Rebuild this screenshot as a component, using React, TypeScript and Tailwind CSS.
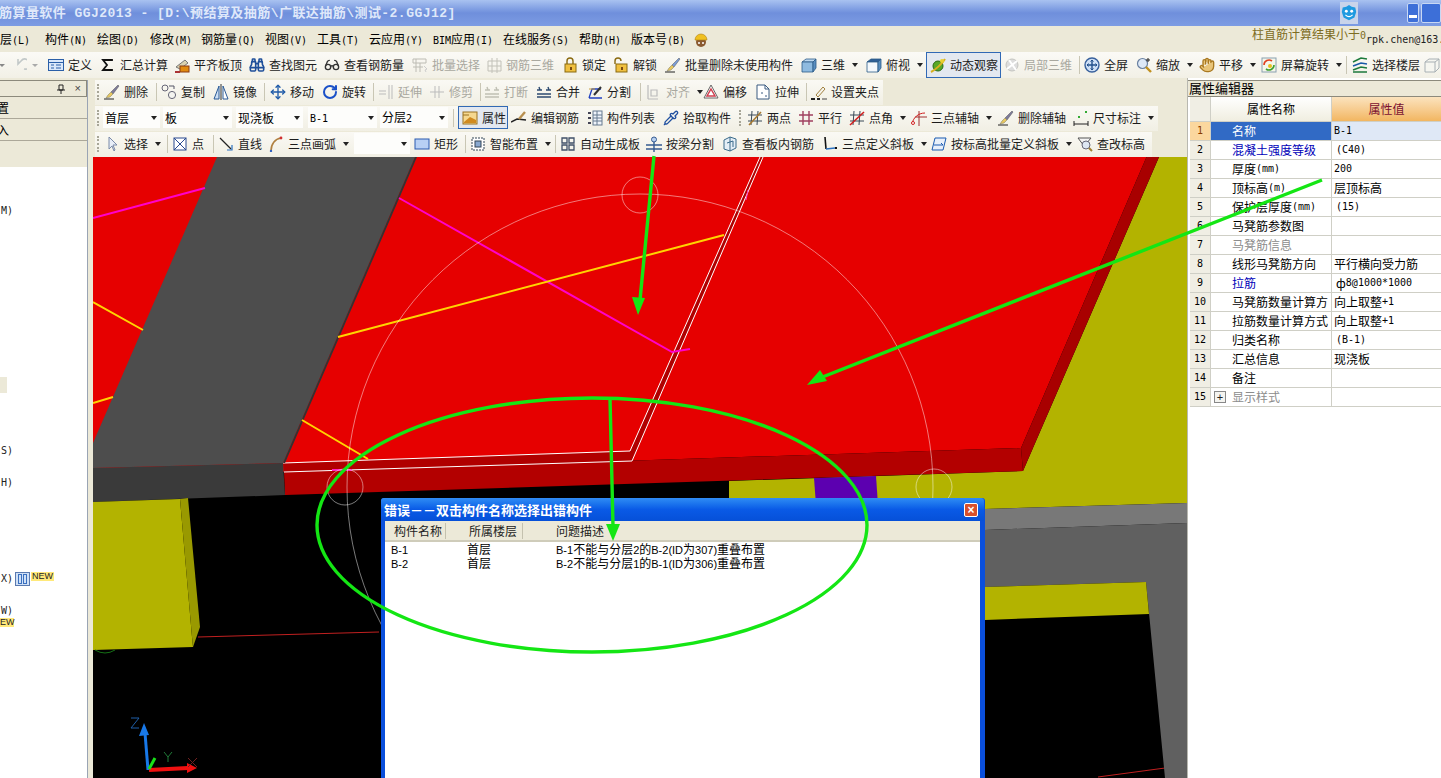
import type { ReactNode } from "react";
import { Binoculars, Glasses, Hand, Move, Pipette, RotateCw } from "lucide-react";

// 16x16 toolbar glyphs, drawn to follow the old XP style icons
const s = (d: string, c: string, w = 1) => <path d={d} stroke={c} strokeWidth={w} fill="none" />;
const brush = (c: string) => (
  <>
    <path d="M14 1l1 1-6 8-2-2z" fill={c} stroke="#555" strokeWidth=".5" />
    <path d="M7 8l2 2-3 3-4 1 2-3z" fill="#e8c860" stroke="#776" strokeWidth=".5" />
    {s("M0 15h10", "#222")}
  </>
);
const cube = (top: string, side: string) => (
  <>
    <path d="M1 5l4-3h10l-3 3z" fill={top} stroke="#2c5a88" strokeWidth=".8" />
    <path d="M1 5h11v10H1z" fill={side} stroke="#2c5a88" strokeWidth=".8" />
    <path d="M12 5l3-3v9l-3 4z" fill="#5b8fc0" stroke="#2c5a88" strokeWidth=".8" />
  </>
);
const lock = (open: boolean) => (
  <>
    {s(open ? "M2 7V4a3 3 0 016 0" : "M5 7V4a3 3 0 016 0v3", "#8a6a10", 1.4)}
    <rect x="3" y="7" width="11" height="8" fill="#f0c040" stroke="#8a6a10" />
    <rect x="8" y="10" width="2" height="3" fill="#7a4a10" />
  </>
);

const icons: Record<string, ReactNode> = {
  define: (<><rect x=".5" y="2.5" width="15" height="11" fill="#dbe8fa" stroke="#2b5fa8" />{s("M1 5.5h14M8 8h5M8 11h5M3 8h3M3 11h3", "#2b5fa8")}</>),
  sigma: s("M12 4V3H3l4 5-4 5h9v-1", "#111", 1.8),
  alignTop: (<><path d="M2 10l9-7 3 3-8 6z" fill="#d9d2b0" stroke="#777" /><rect x="6" y="9" width="9" height="6" fill="#e08a10" stroke="#8a3a10" />{s("M1 15h5", "#a33", 2)}</>),
  batch: (<>{s("M1 2h13v4H1zM4 2v13M1 10h10M8 6v9", "#bdbcb4")}{s("M12 9l3 3-2 1 1 2", "#ccc")}</>),
  rebar3d: s("M2 4h13v10H2zM6 1v15M11 1v15M2 9h13", "#c2c1b8"),
  lock: lock(false),
  unlock: lock(true),
  batchDel: brush("#7a9cd8"),
  cube: cube("#bcd8f0", "#8fbbe0"),
  topView: cube("#2f5f96", "#f4f8fc"),
  orbit: (<><circle cx="8" cy="9" r="5" fill="#58a828" stroke="#2a6a14" /><path d="M1 15C5 13 12 7 15 2" stroke="#d8b020" strokeWidth="2" fill="none" /><circle cx="12" cy="4" r="2" fill="#e8d030" /></>),
  local3d: (<><circle cx="8" cy="8" r="6" fill="#ddd" stroke="#c4c4c0" />{s("M3 12L13 4M5 3l7 10", "#fff", 2)}</>),
  fullscreen: (<><circle cx="8" cy="8" r="7" fill="#cfe0f6" stroke="#38609c" strokeWidth="1.4" />{s("M8 3v10M3 8h10", "#23508c", 1.4)}{s("M6.5 4.5L8 3l1.5 1.5M6.5 11.5L8 13l1.5-1.5M4.5 6.5L3 8l1.5 1.5M11.5 6.5L13 8l-1.5 1.5", "#23508c")}</>),
  zoom: (<><circle cx="6.5" cy="6.5" r="5" fill="#dde8f6" stroke="#6a80a0" strokeWidth="1.2" />{s("M10 10l5 5", "#c09020", 2.4)}{s("M12 1v4M10 3h4", "#222")}</>),
  pan: (<><path d="M3 9l2-3 2 1 1-3 2 1 2-1v6l-2 4H6z" fill="#e8c478" stroke="#8a6a30" />{s("M11 0v4M9 2h4", "#222")}</>),
  screenRot: (<><rect x="1" y="1" width="14" height="14" fill="#f4f6ea" stroke="#8aa0b0" /><path d="M3 8a5 5 0 018-4" stroke="#e04020" strokeWidth="1.6" fill="none" /><path d="M13 8a5 5 0 01-8 4" stroke="#40a030" strokeWidth="1.6" fill="none" /><circle cx="9" cy="9" r="2" fill="#e8c020" /></>),
  floors: (<>{s("M1 5l8-4 6 1", "#1c7a3c", 1.6)}{s("M1 9l8-3 6 1", "#1a5aa8", 1.6)}{s("M1 13l8-3 6 1M1 15h14", "#1c7a3c", 1.6)}</>),
  ghost: (<><path d="M1 5l4-3h10v9l-4 4H1z" fill="#f6f6f0" stroke="#a8b0b4" />{s("M1 5h10v10M11 5l4-3", "#a8b0b4")}</>),
  del: brush("#7d7a9a"),
  copy: (<><circle cx="4" cy="4" r="3" fill="none" stroke="#667" /><circle cx="11" cy="11" r="3.6" fill="#f4f4f0" stroke="#667" />{s("M8 2h5M13 2v3", "#556")}</>),
  mirror: (<><path d="M1 15L6 2v13z" fill="#cfe0f4" stroke="#2a5a98" /><path d="M15 15L10 2v13z" fill="#fff" stroke="#2a5a98" />{s("M8 0v16", "#333")}</>),
  extend: s("M1 7h7M1 10h7M11 1v14M14 1v14", "#bbb"),
  trim: s("M1 8h14M6 2v12M10 2v12", "#bbb"),
  break: s("M1 6h5M10 6h5M1 13h14M3 3l1 3M12 3l1 3M1 10h14", "#c0c0b4", 1.4),
  merge: s("M1 6h5M10 6h5M1 13h14M3 3l1 3M12 3l1 3M1 10h14", "#2c4a70", 1.4),
  split: (<>{s("M2 14h13M2 14l3-9h9", "#2040c0", 1.3)}{s("M7 11L14 3", "#333", 2)}{s("M2 5h6", "#c8a040")}</>),
  align: s("M2 1v14M2 15h10M5 6h6v6H5z", "#bbb", 1.2),
  offset: (<><path d="M8 1l7 13H1z" fill="#fff" stroke="#666" /><path d="M8 5l4 7H4z" fill="none" stroke="#d04050" strokeWidth="1.5" /></>),
  stretch: (<><path d="M2 1h8l4 4v10H2z" fill="#fff" stroke="#3a5a80" />{s("M10 1v4h4M6 9h2M10 12h2", "#3a5a80")}</>),
  grips: (<>{s("M5 11l7-8 2 2-7 8z", "#a08040")}<rect x="0" y="14" width="4" height="2" fill="#222" /><rect x="6" y="14" width="3" height="2" fill="#222" />{s("M11 15h5", "#444")}</>),
  attr: (<><rect x="1" y="2" width="14" height="12" fill="#f5d890" stroke="#9a7020" />{s("M1 5h6", "#9a7020")}<path d="M2 12l6-5 6 3v3H2z" fill="#d08a20" /></>),
  editBar: (<>{s("M0 12l6-3 9 1", "#222", 1.4)}{s("M8 9l6-7", "#b89050", 2.4)}</>),
  list: (<><rect x="6" y="1" width="9" height="14" fill="#eef3fa" stroke="#667a90" />{s("M6 5h9M6 8h9M6 11h9M10 1v14", "#667a90")}{s("M1 3h3M1 8h3M1 13h3", "#445", 2)}</>),
  two: (<>{s("M1 5h14M1 11h14M5 1l-1 14M11 1l-1 14", "#3a4a58")}{s("M2 15L14 2", "#a87a30", 1.5)}</>),
  parallel: s("M1 5h14M1 11h14M5 1v14M11 1v14", "#a04060", 1.4),
  angle: (<>{s("M1 5h14M1 11h14M5 1L4 15M11 1l-1 14", "#3a4a58")}{s("M1 15L15 2", "#d02020", 1.6)}</>),
  threeAxis: (<>{s("M8 1v15M4 7h12", "#a03030")}{s("M1 14C2 8 7 3 14 3", "#d02020")}<circle cx="2" cy="13" r="1.5" fill="#fff" stroke="#d02020" /></>),
  dim: (<>{s("M1 14h14M1 11v6M15 11v6", "#222")}<rect x="5" y="6" width="2" height="2" fill="#3a3" /><rect x="12" y="1" width="2" height="2" fill="#3a3" /></>),
  select: (<path d="M5 1v12l3-3 2 5 1-1-2-5h4z" fill="#e8eef8" stroke="#7a8aa8" />),
  point: (<><rect x="2" y="2" width="12" height="12" fill="#fff" stroke="#2a4a90" />{s("M2 2l12 12M14 2L2 14", "#2a4a90")}</>),
  line: (<>{s("M2 2l11 11", "#222", 1.2)}{s("M14 9v5H9", "#2a70c0", 1.2)}</>),
  arc: (<>{s("M3 15C3 8 7 3 13 2", "#b08040", 1.6)}<circle cx="13" cy="2" r="1.4" fill="#d03030" /><circle cx="3" cy="15" r="1.2" fill="#3060c0" /></>),
  rect: (<rect x="1" y="3" width="14" height="10" fill="#b8d0f4" stroke="#2a5ab0" />),
  smart: (<><path d="M2 2h12v12H2z" fill="#fff" stroke="#345" strokeDasharray="2 1" /><rect x="5" y="5" width="6" height="6" fill="#88a8d0" stroke="#345" /></>),
  auto: s("M2 2h5v5H2zM9 2h5v5H9zM2 9h5v5H2zM9 9h5v5H9z", "#405068", 1.3),
  beamSplit: (<>{s("M0 9h16M0 13h16", "#345a90", 1.4)}{s("M8 6v10", "#345a90", 1.4)}<circle cx="8" cy="3.5" r="2.5" fill="#b8d0f0" stroke="#345a90" /></>),
  viewBoard: (<><path d="M2 4l6-3 6 2v9l-6 3-6-2z" fill="#e4eef6" stroke="#3a6a8a" />{s("M5 7l6-2v6M8 1v14", "#3a6a8a")}</>),
  slope3: (<>{s("M3 1l1 12", "#111", 1.6)}{s("M4 13l9-1", "#2a70c0", 1.6)}<rect x="13" y="11" width="2" height="2" fill="#111" /></>),
  slopeEl: (<><path d="M4 2h11l-3 12H1z" fill="#e8f0fa" stroke="#1a5ab0" />{s("M3 9h9l-2-2", "#1a5ab0")}</>),
  check: (<><path d="M1 2h13l-5 6-2 2z" fill="#f4f4f4" stroke="#555" /><circle cx="9" cy="9" r="4" fill="#dde6f2" stroke="#667" />{s("M12 12l3 3", "#a08030", 2)}</>),
};

function Icon({ name }: { name: string }) {
  return (
    <svg viewBox="0 0 16 16" className="h-4 w-4 shrink-0">
      {icons[name]}
    </svg>
  );
}

// CJK runs stay in Noto, latin runs get a narrow mono that mimics SimSun half-width
function Mix({ t }: { t: string }) {
  return (
    <>
      {t.split(/([\x20-\x7e]+)/).map((p, i) =>
        i % 2 === 1 ? (
          <span key={i} className="font-['DejaVu_Sans_Mono',monospace] text-[10px]">
            {p}
          </span>
        ) : (
          p
        ),
      )}
    </>
  );
}

// the dialog list uses a proportional latin face
function SansMix({ t }: { t: string }) {
  return (
    <>
      {t.split(/([\x20-\x7e]+)/).map((p, i) =>
        i % 2 === 1 ? (
          <span key={i} className="font-['Liberation_Sans',sans-serif] text-[11px]">
            {p}
          </span>
        ) : (
          p
        ),
      )}
    </>
  );
}

function Caret() {
  return <span className="ml-[7px] h-0 w-0 shrink-0 border-x-[3px] border-t-[4px] border-x-transparent border-t-[#222]" />;
}

type ToolProps = { w: string; icon?: ReactNode; i?: string; label: string; arrow?: boolean; off?: boolean; on?: boolean };

function Tool({ w, icon, i, label, arrow, off, on }: ToolProps) {
  return (
    <div
      className={`flex h-full shrink-0 items-center whitespace-nowrap ${w} ${off ? "text-[#a9a89f]" : "text-[#1c1c1c]"} ${
        on ? "border border-[#3169b5] bg-[#e3e8f0] pl-[3px]" : ""
      }`}
    >
      {i ? <Icon name={i} /> : icon}
      <span className="ml-1">
        <Mix t={label} />
      </span>
      {arrow ? <Caret /> : null}
    </div>
  );
}

function Sep({ w }: { w: string }) {
  return (
    <div className={`flex h-full shrink-0 items-center justify-center ${w}`}>
      <div className="h-[18px] w-px bg-[#c9c6b4]" />
    </div>
  );
}

function Grip({ w }: { w: string }) {
  return (
    <div className={`flex h-full shrink-0 items-center ${w}`}>
      <div className="ml-[2px] h-[16px] w-[2px] border-l-2 border-dotted border-[#a8a698]" />
    </div>
  );
}

function Combo({ w, label, gap }: { w: string; label: string; gap: string }) {
  return (
    <div className={`flex h-[21px] shrink-0 items-center justify-between bg-[#fdfdfb] pl-[2px] pr-[3px] ${w} ${gap}`}>
      <span>
        <Mix t={label} />
      </span>
      <span className="h-0 w-0 border-x-[3px] border-t-[4px] border-x-transparent border-t-[#222]" />
    </div>
  );
}

const band = "flex h-[25px] w-fit items-center bg-linear-to-b from-[#faf9f4] to-[#f1efe4] pb-[2px]";

const menus: [string, string][] = [
  ["w-[52px]", "构件(N)"],
  ["w-[53px]", "绘图(D)"],
  ["w-[51px]", "修改(M)"],
  ["w-[64px]", "钢筋量(Q)"],
  ["w-[52px]", "视图(V)"],
  ["w-[52px]", "工具(T)"],
  ["w-[64px]", "云应用(Y)"],
  ["w-[70px]", "BIM应用(I)"],
  ["w-[76px]", "在线服务(S)"],
  ["w-[52px]", "帮助(H)"],
  ["w-[62px]", "版本号(B)"],
];

const props: { name: string; value?: string; nameCls?: string; pad?: boolean }[] = [
  { name: "名称", value: "B-1" },
  { name: "混凝土强度等级", value: "(C40)", nameCls: "text-[#0000b8]", pad: true },
  { name: "厚度(mm)", value: "200" },
  { name: "顶标高(m)", value: "层顶标高" },
  { name: "保护层厚度(mm)", value: "(15)", pad: true },
  { name: "马凳筋参数图" },
  { name: "马凳筋信息", nameCls: "text-[#8c8c8c]" },
  { name: "线形马凳筋方向", value: "平行横向受力筋" },
  { name: "拉筋", value: "ф8@1000*1000", nameCls: "text-[#0000b8]", pad: true },
  { name: "马凳筋数量计算方", value: "向上取整+1" },
  { name: "拉筋数量计算方式", value: "向上取整+1" },
  { name: "归类名称", value: "(B-1)", pad: true },
  { name: "汇总信息", value: "现浇板" },
  { name: "备注" },
  { name: "显示样式", nameCls: "text-[#8c8c8c]" },
];

function Scene() {
  return (
    <svg viewBox="93 157 1094 621" className="absolute inset-0 h-full w-full">
      {/* olive floor behind the slab */}
      <polygon points="1159,157 1187,157 1187,503 985,509 729,512 729,481 1023,471" fill="#b3b300" />
      <polygon points="814,478 876,476 878,505 816,505" fill="#5c00b0" />
      {/* slab */}
      <polygon points="93,157 1146.5,157 1021,448 284,472 93,478" fill="#e60000" />
      <polygon points="1146.5,157 1159,157 1023,471 1021,448" fill="#a80000" />
      <polygon points="284,472 1021,448 1023,471 285,495" fill="#b30000" />
      <polygon points="283,463 630,451 760,157 763,157 632,461 284,472" fill="#b00000" />
      <polyline points="283,463 630,451 760,157" fill="none" stroke="#fff" />
      <polyline points="284,472 632,461 763,157" fill="none" stroke="#fff" />
      {/* grey beam */}
      <polygon points="217,157 415,157 283,463 93,468 93,443" fill="#4d4d4d" />
      <polygon points="415,157 417,157 285,463 283,463" fill="#333" />
      <polygon points="93,468 283,463 285,495 93,502" fill="#3a3a3a" />
      {/* rebar lines */}
      <g fill="none" strokeWidth="2">
        <path d="M93 218L205 188M399 198L672 352L690 349" stroke="#ff00cc" />
        <path d="M748 190L746 200" stroke="#ff40c0" strokeWidth="1" />
        <path d="M338 337L724 235M93 302L143 330M93 403L113 397M302 420L368 459" stroke="#ffd400" />
        <path d="M332 470L352 470" stroke="#ff20c0" />
      </g>
      {/* left column */}
      <polygon points="93,502 180,499 192,637 193,647 93,650" fill="#b3b300" />
      <polygon points="180,499 188,498 200,627 193,647 192,637" fill="#999900" />
      <path d="M198 637L379 632M1098 777L1165 768" stroke="#c02020" fill="none" />
      <path d="M95 650q10 6 20 0" stroke="#167016" fill="none" />
      {/* right side beam */}
      <polygon points="985,509 1187,503 1187,523 985,530" fill="#787878" />
      <polygon points="985,530 1187,523 1187,778 1165,778 1146,582 985,587" fill="#606060" />
      <polygon points="985,587 1146,582 1149,614 985,620" fill="#b3b300" />
      {/* selection circles */}
      <g fill="none" stroke="#fff" strokeOpacity=".6" strokeWidth=".8">
        <circle cx="640" cy="487" r="293" />
        <circle cx="640" cy="195" r="18" />
        <circle cx="345" cy="487" r="18" />
        <circle cx="934" cy="487" r="18" />
      </g>
      {/* axis triad */}
      <g fill="none">
        <path d="M148 770L145 733" stroke="#1878e8" strokeWidth="3" />
        <polygon points="144,723 139,736 149,735" fill="#1878e8" />
        <path d="M149 770L188 768" stroke="#f01010" strokeWidth="4" />
        <polygon points="187,763 187,773 197,768" fill="#f01010" />
        <path d="M149 769L155 758" stroke="#18e018" strokeWidth="3" />
        <path d="M131 718h8l-8 10h8" stroke="#1f5fa8" />
        <path d="M164 752l4 5 4-5M168 757v5" stroke="#207a38" />
        <path d="M188 758l9 9M197 758l-9 9" stroke="#702020" />
      </g>
    </svg>
  );
}

export default function App() {
  return (
    <div className="relative flex h-[778px] w-[1441px] flex-col overflow-hidden bg-[#ece9d8] font-['Noto_Sans_CJK_SC','Liberation_Sans',sans-serif] text-[12px] leading-none text-black">
      {/* title bar */}
      <div className="flex h-[26px] shrink-0 items-center bg-linear-to-b from-[#a9c2f0] via-[#6f8fdc] to-[#7d9ce3]">
        <div className="-ml-px w-[1341px] shrink-0 whitespace-nowrap font-['Liberation_Mono','Noto_Sans_CJK_SC',monospace] text-[13px] font-bold tracking-[0.45px] text-[#dfe8fa]">
          筋算量软件 GGJ2013 - [D:\预结算及抽筋\广联达抽筋\测试-2.GGJ12]
        </div>
        <div className="flex h-[22px] w-[25px] items-center justify-center bg-[#c9d4ea]">
          <svg viewBox="0 0 20 20" className="h-[18px] w-[18px]">
            <path d="M10 1l3 2 4 1 1 5-2 6-6 3-6-3-2-6 1-5 4-1z" fill="#1e9ae0" />
            <circle cx="7" cy="8" r="1.6" fill="#fff" />
            <circle cx="13" cy="8" r="1.6" fill="#fff" />
            <path d="M6 12q4 4 8 0" stroke="#fff" strokeWidth="1.2" fill="none" />
          </svg>
        </div>
        <div className="ml-[49px] flex h-5 w-[19px] items-end justify-center rounded-[2px] border border-[#c8d8f4] bg-[#3d6fd8] pb-1">
          <div className="h-[3px] w-2 bg-white" />
        </div>
        <div className="ml-[2px] h-5 w-5 shrink-0 rounded-[2px] border border-[#c8d8f4] bg-[#3d6fd8]" />
      </div>

      {/* menu bar */}
      <div className="flex h-[26px] shrink-0 items-center pt-[1px]">
        <div className="-ml-[12px] w-[57px] shrink-0 whitespace-nowrap">
          <Mix t="楼层(L)" />
        </div>
        {menus.map(([w, t]) => (
          <div key={t} className={`shrink-0 whitespace-nowrap ${w}`}>
            <Mix t={t} />
          </div>
        ))}
        <svg viewBox="0 0 16 16" className="h-4 w-4 shrink-0">
          <circle cx="8" cy="10" r="5" fill="#8a5a30" />
          <circle cx="6" cy="11" r="1" fill="#fff" />
          <circle cx="10" cy="11" r="1" fill="#fff" />
          <path d="M2 8a6 6 0 0112 0z" fill="#f0c020" stroke="#b08010" strokeWidth=".6" />
        </svg>
        <div className="ml-[543px] shrink-0 -translate-y-[5px] whitespace-nowrap text-[#7d6c22]">
          柱直筋计算结果小于<span className="font-['DejaVu_Sans_Mono',monospace] text-[10px]">0</span>
        </div>
        <div className="shrink-0 whitespace-nowrap font-['DejaVu_Sans_Mono',monospace] text-[10px] text-[#222]">rpk.chen@163.com</div>
      </div>

      {/* standard toolbar */}
      <div className="flex h-[26px] shrink-0 items-center bg-linear-to-b from-[#fbfaf6] to-[#f2f0e6]">
        <div className="flex h-full w-[48px] shrink-0 items-center text-[#b8b8ae]">
          <span className="ml-[-1px] h-0 w-0 border-x-[3px] border-t-[3px] border-x-transparent border-t-[#888]" />
          <svg viewBox="0 0 16 16" className="ml-[6px] h-4 w-4">
            <path d="M13 12a5 5 0 10-3-8L7 7V2" stroke="#c2c8c8" strokeWidth="1.6" fill="none" />
          </svg>
          <span className="ml-[5px] h-0 w-0 border-x-[3px] border-t-[3px] border-x-transparent border-t-[#aaa]" />
        </div>
        <Tool w="w-[52px]" i="define" label="定义" />
        <Tool w="w-[74px]" i="sigma" label="汇总计算" />
        <Tool w="w-[75px]" i="alignTop" label="平齐板顶" />
        <Tool w="w-[75px]" icon={<Binoculars size={16} color="#1f4f9a" strokeWidth={2.4} />} label="查找图元" />
        <Tool w="w-[88px]" icon={<Glasses size={16} color="#333" />} label="查看钢筋量" />
        <Tool w="w-[74px]" i="batch" label="批量选择" off />
        <Tool w="w-[76px]" i="rebar3d" label="钢筋三维" off />
        <Tool w="w-[51px]" i="lock" label="锁定" />
        <Tool w="w-[52px]" i="unlock" label="解锁" />
        <Tool w="w-[136px]" i="batchDel" label="批量删除未使用构件" />
        <Tool w="w-[65px]" i="cube" label="三维" arrow />
        <Tool w="w-[60px]" i="topView" label="俯视" arrow />
        <Tool w="w-[75px]" i="orbit" label="动态观察" on />
        <div className="w-[3px] shrink-0" />
        <Tool w="w-[71px]" i="local3d" label="局部三维" off />
        <Sep w="w-[9px]" />
        <Tool w="w-[52px]" i="fullscreen" label="全屏" />
        <Tool w="w-[63px]" i="zoom" label="缩放" arrow />
        <Tool w="w-[62px]" icon={<Hand size={16} color="#a87820" fill="#e8c478" />} label="平移" arrow />
        <Tool w="w-[80px]" i="screenRot" label="屏幕旋转" arrow />
        <Sep w="w-[11px]" />
        <Tool w="w-[72px]" i="floors" label="选择楼层" />
        <Icon name="ghost" />
      </div>

      {/* body */}
      <div className="flex min-h-0 flex-1">
        {/* left navigation panel */}
        <div className="flex w-[93px] shrink-0 pt-[2px]">
          <div className="flex w-[88px] shrink-0 flex-col border-r border-[#9aa4b4]">
            <div className="flex h-[17px] shrink-0 items-center justify-end gap-[9px] border-b border-t border-r border-[#8c8a7c] pr-[5px]">
              <svg viewBox="0 0 10 10" className="h-[10px] w-[10px]">
                <path d="M3 1h4v5H3zM1 6h8M5 6v4" stroke="#222" fill="none" />
              </svg>
              <span className="font-['Liberation_Sans',sans-serif] text-[11px] text-[#444]">×</span>
            </div>
            <div className="flex h-[22px] shrink-0 items-center border-b border-[#aca899] bg-[#ece9d8]">
              <span className="-ml-[3px]">置</span>
            </div>
            <div className="flex h-[22px] shrink-0 items-center border-b border-[#aca899] bg-[#ece9d8]">
              <span className="-ml-[3px]">入</span>
            </div>
            <div className="h-[26px] shrink-0 bg-[#ece9d8]" />
            <div className="flex min-h-0 flex-1 flex-col bg-white font-['DejaVu_Sans_Mono',monospace] text-[10px] leading-4 text-[#222]">
              <div className="mt-[36px] h-4 -ml-[5px]">(M)</div>
              <div className="mt-[158px] h-4 w-[7px] bg-[#ece9d8]" />
              <div className="mt-[50px] h-4 -ml-[5px]">(S)</div>
              <div className="mt-4 h-4 -ml-[5px]">(H)</div>
              <div className="mt-[80px] flex h-4 items-center -ml-[5px]">
                (X)
                <span className="ml-[2px] flex h-[14px] w-[15px] items-center justify-center gap-[1px] border border-[#5a7ab0] bg-[#cfe0f6]">
                  <span className="h-[10px] w-[4px] border border-[#3a70c0]" />
                  <span className="h-[10px] w-[4px] border border-[#3a70c0]" />
                </span>
                <span className="-mt-[5px] ml-[1px] bg-[#ffe97a] px-[1px] font-['Liberation_Sans',sans-serif] text-[9px] leading-[9px] text-[#222]">NEW</span>
              </div>
              <div className="mt-4 h-4 -ml-[5px]">(W)</div>
              <div className="-mt-[1px] w-[14px] bg-[#ffe97a] font-['Liberation_Sans',sans-serif] text-[9px] leading-[9px]">EW</div>
            </div>
          </div>
        </div>

        {/* centre column */}
        <div className="flex w-[1094px] shrink-0 flex-col">
          <div className="flex h-[79px] shrink-0 flex-col pl-[2px] pt-[2px]">
            <div className={band}>
              <Grip w="w-[9px]" />
              <Tool w="w-[48px]" i="del" label="删除" />
              <Sep w="w-[9px]" />
              <Tool w="w-[52px]" i="copy" label="复制" />
              <Tool w="w-[46px]" i="mirror" label="镜像" />
              <Sep w="w-[11px]" />
              <Tool w="w-[52px]" icon={<Move size={16} color="#1f5aa8" />} label="移动" />
              <Tool w="w-[46px]" icon={<RotateCw size={16} color="#1a50c8" strokeWidth={3} />} label="旋转" />
              <Sep w="w-[10px]" />
              <Tool w="w-[51px]" i="extend" label="延伸" off />
              <Tool w="w-[47px]" i="trim" label="修剪" off />
              <Sep w="w-[8px]" />
              <Tool w="w-[52px]" i="break" label="打断" off />
              <Tool w="w-[51px]" i="merge" label="合并" />
              <Tool w="w-[47px]" i="split" label="分割" />
              <Sep w="w-[12px]" />
              <Tool w="w-[57px]" i="align" label="对齐" off arrow />
              <Tool w="w-[52px]" i="offset" label="偏移" />
              <Tool w="w-[47px]" i="stretch" label="拉伸" />
              <Sep w="w-[9px]" />
              <Tool w="w-[72px]" i="grips" label="设置夹点" />
            </div>
            <div className={`mt-px ${band}`}>
              <Grip w="w-[8px]" />
              <Combo w="w-[57px]" gap="mr-[3px]" label="首层" />
              <Combo w="w-[69px]" gap="mr-[4px]" label="板" />
              <Combo w="w-[67px]" gap="mr-[5px]" label="现浇板" />
              <Combo w="w-[69px]" gap="mr-[3px]" label="B-1" />
              <Combo w="w-[68px]" gap="mr-0" label="分层2" />
              <Sep w="w-[10px]" />
              <Tool w="w-[50px]" i="attr" label="属性" on />
              <div className="w-[3px] shrink-0" />
              <Tool w="w-[76px]" i="editBar" label="编辑钢筋" />
              <Tool w="w-[76px]" i="list" label="构件列表" />
              <Tool w="w-[74px]" icon={<Pipette size={16} color="#2050a0" />} label="拾取构件" />
              <Grip w="w-[10px]" />
              <Tool w="w-[51px]" i="two" label="两点" />
              <Tool w="w-[51px]" i="parallel" label="平行" />
              <Tool w="w-[62px]" i="angle" label="点角" arrow />
              <Tool w="w-[87px]" i="threeAxis" label="三点辅轴" arrow />
              <Tool w="w-[75px]" i="del" label="删除辅轴" />
              <Tool w="w-[85px]" i="dim" label="尺寸标注" arrow />
            </div>
            <div className={`mt-px ${band}`}>
              <Grip w="w-[9px]" />
              <Tool w="w-[59px]" i="select" label="选择" arrow />
              <Sep w="w-[9px]" />
              <Tool w="w-[36px]" i="point" label="点" />
              <Sep w="w-[10px]" />
              <Tool w="w-[50px]" i="line" label="直线" />
              <Tool w="w-[86px]" i="arc" label="三点画弧" arrow />
              <Combo w="w-[56px]" gap="mr-[4px]" label=" " />
              <Tool w="w-[47px]" i="rect" label="矩形" />
              <Sep w="w-[9px]" />
              <Tool w="w-[80px]" i="smart" label="智能布置" arrow />
              <Sep w="w-[10px]" />
              <Tool w="w-[86px]" i="auto" label="自动生成板" />
              <Tool w="w-[76px]" i="beamSplit" label="按梁分割" />
              <Tool w="w-[100px]" i="viewBoard" label="查看板内钢筋" />
              <Tool w="w-[109px]" i="slope3" label="三点定义斜板" arrow />
              <Tool w="w-[146px]" i="slopeEl" label="按标高批量定义斜板" arrow />
              <Tool w="w-[75px]" i="check" label="查改标高" />
            </div>
          </div>

          {/* 3D canvas with the error dialog over it */}
          <div className="relative min-h-0 flex-1 overflow-hidden bg-black">
            <Scene />
            <div className="absolute left-[288px] top-[341px] flex h-[290px] w-[604px] flex-col rounded-t-[3px] bg-[#0a4fdc] pb-0 pl-[4px] pr-[5px]">
              <div className="-mx-[4px] flex h-[23px] shrink-0 items-center justify-between rounded-t-[3px] bg-linear-to-b from-[#2f8cf4] via-[#0a5ae6] to-[#0650d8] pl-[3px] pr-[6px]">
                <span className="whitespace-nowrap text-[13px] font-bold text-white">错误－－双击构件名称选择出错构件</span>
                <span className="flex h-[14px] w-[14px] items-center justify-center rounded-[2px] border border-white bg-[#d8502c] font-['Liberation_Sans',sans-serif] text-[12px] font-bold text-white">×</span>
              </div>
              <div className="flex min-h-0 flex-1 flex-col bg-white">
                <div className="flex h-[21px] shrink-0 items-center border-b-2 border-[#cfccba] bg-[#ece9d8] text-[#222]">
                  <div className="w-[61px] shrink-0 border-r border-[#c4c1ae] pl-[9px] leading-[16px]">构件名称</div>
                  <div className="w-[77px] shrink-0 border-r border-[#c4c1ae] pl-[23px] leading-[16px] whitespace-nowrap">所属楼层</div>
                  <div className="pl-[33px]">问题描述</div>
                </div>
                <div className="flex h-[14px] items-center leading-[14px]">
                  <div className="w-[82px] shrink-0 pl-[6px]">
                    <SansMix t="B-1" />
                  </div>
                  <div className="w-[89px] shrink-0">首层</div>
                  <div className="whitespace-nowrap">
                    <SansMix t="B-1不能与分层2的B-2(ID为307)重叠布置" />
                  </div>
                </div>
                <div className="flex h-[14px] items-center leading-[14px]">
                  <div className="w-[82px] shrink-0 pl-[6px]">
                    <SansMix t="B-2" />
                  </div>
                  <div className="w-[89px] shrink-0">首层</div>
                  <div className="whitespace-nowrap">
                    <SansMix t="B-2不能与分层1的B-1(ID为306)重叠布置" />
                  </div>
                </div>
              </div>
            </div>
          </div>
        </div>

        {/* property panel */}
        <div className="flex min-w-0 flex-1 flex-col border-l border-[#b8b8b0] bg-white pt-[2px]">
          <div className="h-[17px] shrink-0 border-y border-[#8c8a7c] bg-[#ece9d8] pl-[1px] text-[13px] leading-[13px]">属性编辑器</div>
          <div className="grid grid-cols-[21px_121px_1fr] pl-[2px]">
            <div className="h-[25px] border-b border-r border-[#cfcfc6] bg-[#f0eee4]" />
            <div className="flex h-[25px] items-center justify-center border-b border-r border-[#cfcfc6] bg-linear-to-b from-white to-[#f0eee0]">属性名称</div>
            <div className="flex h-[25px] items-center justify-center border-b border-[#cfcfc6] bg-linear-to-b from-[#fbe3bd] to-[#f2b660] text-[#7a1030]">属性值</div>
            {props.map((p, n) => (
              <div key={p.name} className="contents">
                <div className={`flex h-[19px] items-center justify-center border-b border-r border-[#cfcfc6] font-['DejaVu_Sans_Mono',monospace] text-[10px] ${n === 0 ? "bg-[#fbd79e] text-[#8a3a00]" : "bg-[#f0eee4]"}`}>
                  {n + 1}
                </div>
                <div className={`flex h-[19px] items-center whitespace-nowrap border-b border-r border-[#cfcfc6] ${n === 14 ? "pl-[3px]" : "pl-[21px]"} ${n === 0 ? "bg-[#316ac5] text-white" : p.nameCls ?? ""}`}>
                  {n === 14 ? (
                    <span className="mr-[6px] flex h-3 w-3 items-center justify-center border border-[#888] bg-[#f4f4f0] font-['Liberation_Sans',sans-serif] text-[11px] text-[#222]">+</span>
                  ) : null}
                  <Mix t={p.name} />
                </div>
                <div className={`flex h-[19px] items-center whitespace-pre border-b border-[#cfcfc6] ${p.pad ? "pl-[4px]" : "pl-[2px]"} ${n === 0 ? "bg-[#dfe8f6]" : ""}`}>
                  {p.value ? <Mix t={p.value} /> : null}
                </div>
              </div>
            ))}
          </div>
        </div>
      </div>

      {/* green hand-drawn annotations over everything */}
      <svg viewBox="0 0 1441 778" className="pointer-events-none absolute inset-0 h-[778px] w-[1441px]">
        <g fill="none" stroke="#14e614" strokeWidth="3.4">
          <ellipse cx="592" cy="525" rx="275" ry="127" />
          <path d="M654 156L640 300M1322 180L820 378M610 398L613 526" />
        </g>
        <g fill="#14e614">
          <polygon points="638,315 632,297 645,298" />
          <polygon points="807,385 820,370 827,381" />
          <polygon points="613,541 606,524 620,524" />
        </g>
      </svg>
    </div>
  );
}
